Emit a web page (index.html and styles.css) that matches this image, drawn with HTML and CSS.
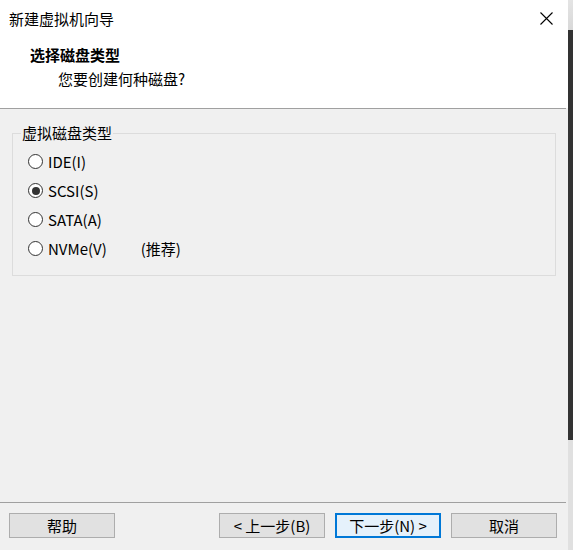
FILE: index.html
```html
<!DOCTYPE html>
<html lang="zh-CN">
<head>
<meta charset="utf-8">
<title>新建虚拟机向导</title>
<link rel="stylesheet" href="styles.css">
</head>
<body>
<div class="window">
  <div class="dialog">
    <div class="top">
      <div class="titlebar">
        <span class="title">新建虚拟机向导</span>
        <svg class="close" width="13" height="13" viewBox="0 0 13 13"><path d="M0.5 0.5 L12.5 12.5 M12.5 0.5 L0.5 12.5" stroke="#000" stroke-width="1.1" fill="none"/></svg>
      </div>
      <div class="header">
        <div class="heading">选择磁盘类型</div>
        <div class="subtitle">您要创建何种磁盘?</div>
      </div>
    </div>
    <div class="sep"></div>
    <div class="body">
      <fieldset class="group">
        <legend class="legend">虚拟磁盘类型</legend>
        <div class="radio"><span class="circle"></span><span class="label">IDE(I)</span></div>
        <div class="radio"><span class="circle checked"></span><span class="label">SCSI(S)</span></div>
        <div class="radio"><span class="circle"></span><span class="label">SATA(A)</span></div>
        <div class="radio"><span class="circle"></span><span class="label">NVMe(V)</span><span class="note">(推荐)</span></div>
      </fieldset>
    </div>
    <div class="sep"></div>
    <div class="footer">
      <button class="btn">帮助</button>
      <div class="nav">
        <button class="btn">&lt; 上一步(B)</button>
        <button class="btn default">下一步(N) &gt;</button>
        <button class="btn">取消</button>
      </div>
    </div>
  </div>
  <div class="strip"></div>
</div>
</body>
</html>
```

FILE: styles.css
```css
html, body {
  margin: 0;
  padding: 0;
}
body {
  width: 573px;
  height: 550px;
  overflow: hidden;
  font-family: "Noto Sans CJK SC", "Microsoft YaHei", sans-serif;
  font-size: 15px;
  color: #000;
  background: #f0f0f0;
}
.window {
  display: flex;
  width: 573px;
  height: 550px;
}
.dialog {
  width: 568px;
  height: 550px;
  display: flex;
  flex-direction: column;
  background: #f0f0f0;
}
.strip {
  width: 5px;
  height: 550px;
  background: linear-gradient(to bottom, #e4e4e4 0, #d8d8d8 30px, #333333 30px, #333333 440px, #e0e0e0 440px, #e0e0e0 100%);
}
.top {
  height: 108px;
  background: #fff;
  display: flex;
  flex-direction: column;
}
.titlebar {
  height: 38px;
  display: flex;
  align-items: center;
  justify-content: space-between;
  padding-left: 9px;
  padding-right: 15px;
}
.title {
  line-height: 20px;
}
.close {
  display: block;
  margin-top: -1px;
}
.header {
  padding-top: 7px;
}
.heading {
  font-weight: bold;
  line-height: 20px;
  padding-left: 30px;
}
.subtitle {
  line-height: 20px;
  margin-top: 4px;
  padding-left: 58px;
}
.sep {
  height: 1px;
  width: 566px;
  background: #a0a0a0;
}
.body {
  flex: 1;
  display: flex;
  flex-direction: column;
}
.group {
  margin: 14px 12px 0 12px;
  padding: 4px 0 12px 15px;
  border: 1px solid #dcdcdc;
  min-width: 0;
}
.legend {
  margin-left: -7px;
  padding: 0 1px;
  line-height: 20px;
}
.radio {
  height: 29px;
  display: flex;
  align-items: center;
}
.circle {
  width: 13px;
  height: 13px;
  border: 1px solid #333;
  border-radius: 50%;
  background: #fff;
  display: flex;
  align-items: center;
  justify-content: center;
  margin-right: 5px;
}
.circle.checked::after {
  content: "";
  width: 8px;
  height: 8px;
  border-radius: 50%;
  background: #333;
}
.label {
  line-height: 20px;
}
.note {
  margin-left: 34px;
  line-height: 20px;
}
.footer {
  display: flex;
  padding: 10px 11px 12px 9px;
}
.nav {
  margin-left: auto;
  display: flex;
  gap: 10px;
}
.btn {
  width: 106px;
  height: 25px;
  padding: 0;
  font-family: inherit;
  font-size: 15px;
  line-height: 20px;
  color: #000;
  background: #e1e1e1;
  border: 1px solid #adadad;
  border-radius: 0;
}
.btn.default {
  border: 2px solid #0078d7;
  background: #e5f1fb;
}
```
